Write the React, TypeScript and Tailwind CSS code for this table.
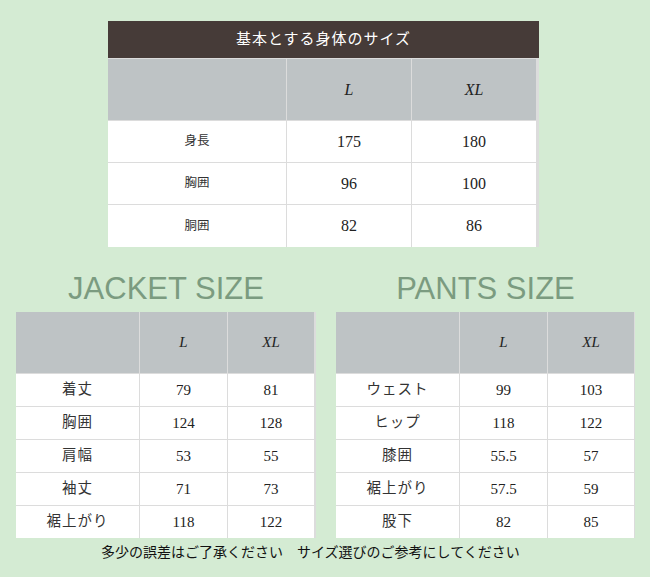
const serif = "font-['Liberation_Serif','Noto_Sans_CJK_JP',serif]"

const bodyRows = [
  ["身長", "175", "180"],
  ["胸囲", "96", "100"],
  ["胴囲", "82", "86"],
]

const jacketRows = [
  ["着丈", "79", "81"],
  ["胸囲", "124", "128"],
  ["肩幅", "53", "55"],
  ["袖丈", "71", "73"],
  ["裾上がり", "118", "122"],
]

const pantsRows = [
  ["ウェスト", "99", "103"],
  ["ヒップ", "118", "122"],
  ["膝囲", "55.5", "57"],
  ["裾上がり", "57.5", "59"],
  ["股下", "82", "85"],
]

const BaseTable = () => {
  return (
    <div className={`w-[431px] ${serif}`}>
      <div className="flex h-[37px] items-center justify-center bg-[#463b38] text-[15px] tracking-[1px] text-white">
        基本とする身体のサイズ
      </div>
      <div className="grid grid-cols-[178px_124px_124px] gap-px border-t border-r-[3px] border-[#dcdcdc] bg-[#dcdcdc]">
        <div className="h-[61px] bg-[#bec3c5]" />
        <div className="flex items-center justify-center bg-[#bec3c5] text-[16px] italic text-[#222]">L</div>
        <div className="flex items-center justify-center bg-[#bec3c5] text-[16px] italic text-[#222]">XL</div>
        {bodyRows.map((row, i) => (
          <>
            <div
              key={`a${i}`}
              className={`flex items-center justify-center bg-white text-[12.5px] text-[#333] ${i === 2 ? "h-[42px]" : "h-[41px]"}`}
            >
              {row[0]}
            </div>
            <div key={`b${i}`} className="flex items-center justify-center bg-white text-[16px] text-[#222]">
              {row[1]}
            </div>
            <div key={`c${i}`} className="flex items-center justify-center bg-white text-[16px] text-[#222]">
              {row[2]}
            </div>
          </>
        ))}
      </div>
    </div>
  )
}

const SizeTable = ({ title, rows, right }: { title: string; rows: string[][]; right: string }) => {
  return (
    <div className="flex flex-col">
      <h2 className="text-center font-['Liberation_Sans',sans-serif] text-[31px] leading-[31px] text-[#7b9b80]">
        {title}
      </h2>
      <div
        className={`mt-[8px] grid grid-cols-[123px_87px_86px] gap-px bg-[#dcdcdc] ${right} ${serif}`}
      >
        <div className="h-[61px] bg-[#bec3c5]" />
        <div className="flex items-center justify-center bg-[#bec3c5] text-[15px] italic text-[#222]">L</div>
        <div className="flex items-center justify-center bg-[#bec3c5] text-[15px] italic text-[#222]">XL</div>
        {rows.map((row, i) => (
          <>
            <div key={`a${i}`} className="flex h-[32px] items-center justify-center bg-white text-[14.5px] tracking-[1px] text-[#333]">
              {row[0]}
            </div>
            <div key={`b${i}`} className="flex items-center justify-center bg-white text-[15px] text-[#222]">
              {row[1]}
            </div>
            <div key={`c${i}`} className="flex items-center justify-center bg-white text-[15px] text-[#222]">
              {row[2]}
            </div>
          </>
        ))}
      </div>
    </div>
  )
}

export default function App() {
  return (
    <div className="h-[577px] w-[650px] overflow-hidden bg-[#d4ebd3] pt-[21px]">
      <div className="pl-[108px]">
        <BaseTable />
      </div>
      <div className="mt-[26px] flex gap-[20px] pl-[16px]">
        <SizeTable title="JACKET SIZE" rows={jacketRows} right="border-r-[2px] border-[#dcdcdc]" />
        <SizeTable title="PANTS SIZE" rows={pantsRows} right="border-r border-[#dcdcdc]" />
      </div>
      <p className="mt-[4px] pl-[101px] font-['Noto_Sans_CJK_JP',sans-serif] text-[14px] leading-[18px] text-[#111]">
        多少の誤差はご了承ください　サイズ選びのご参考にしてください
      </p>
    </div>
  )
}
